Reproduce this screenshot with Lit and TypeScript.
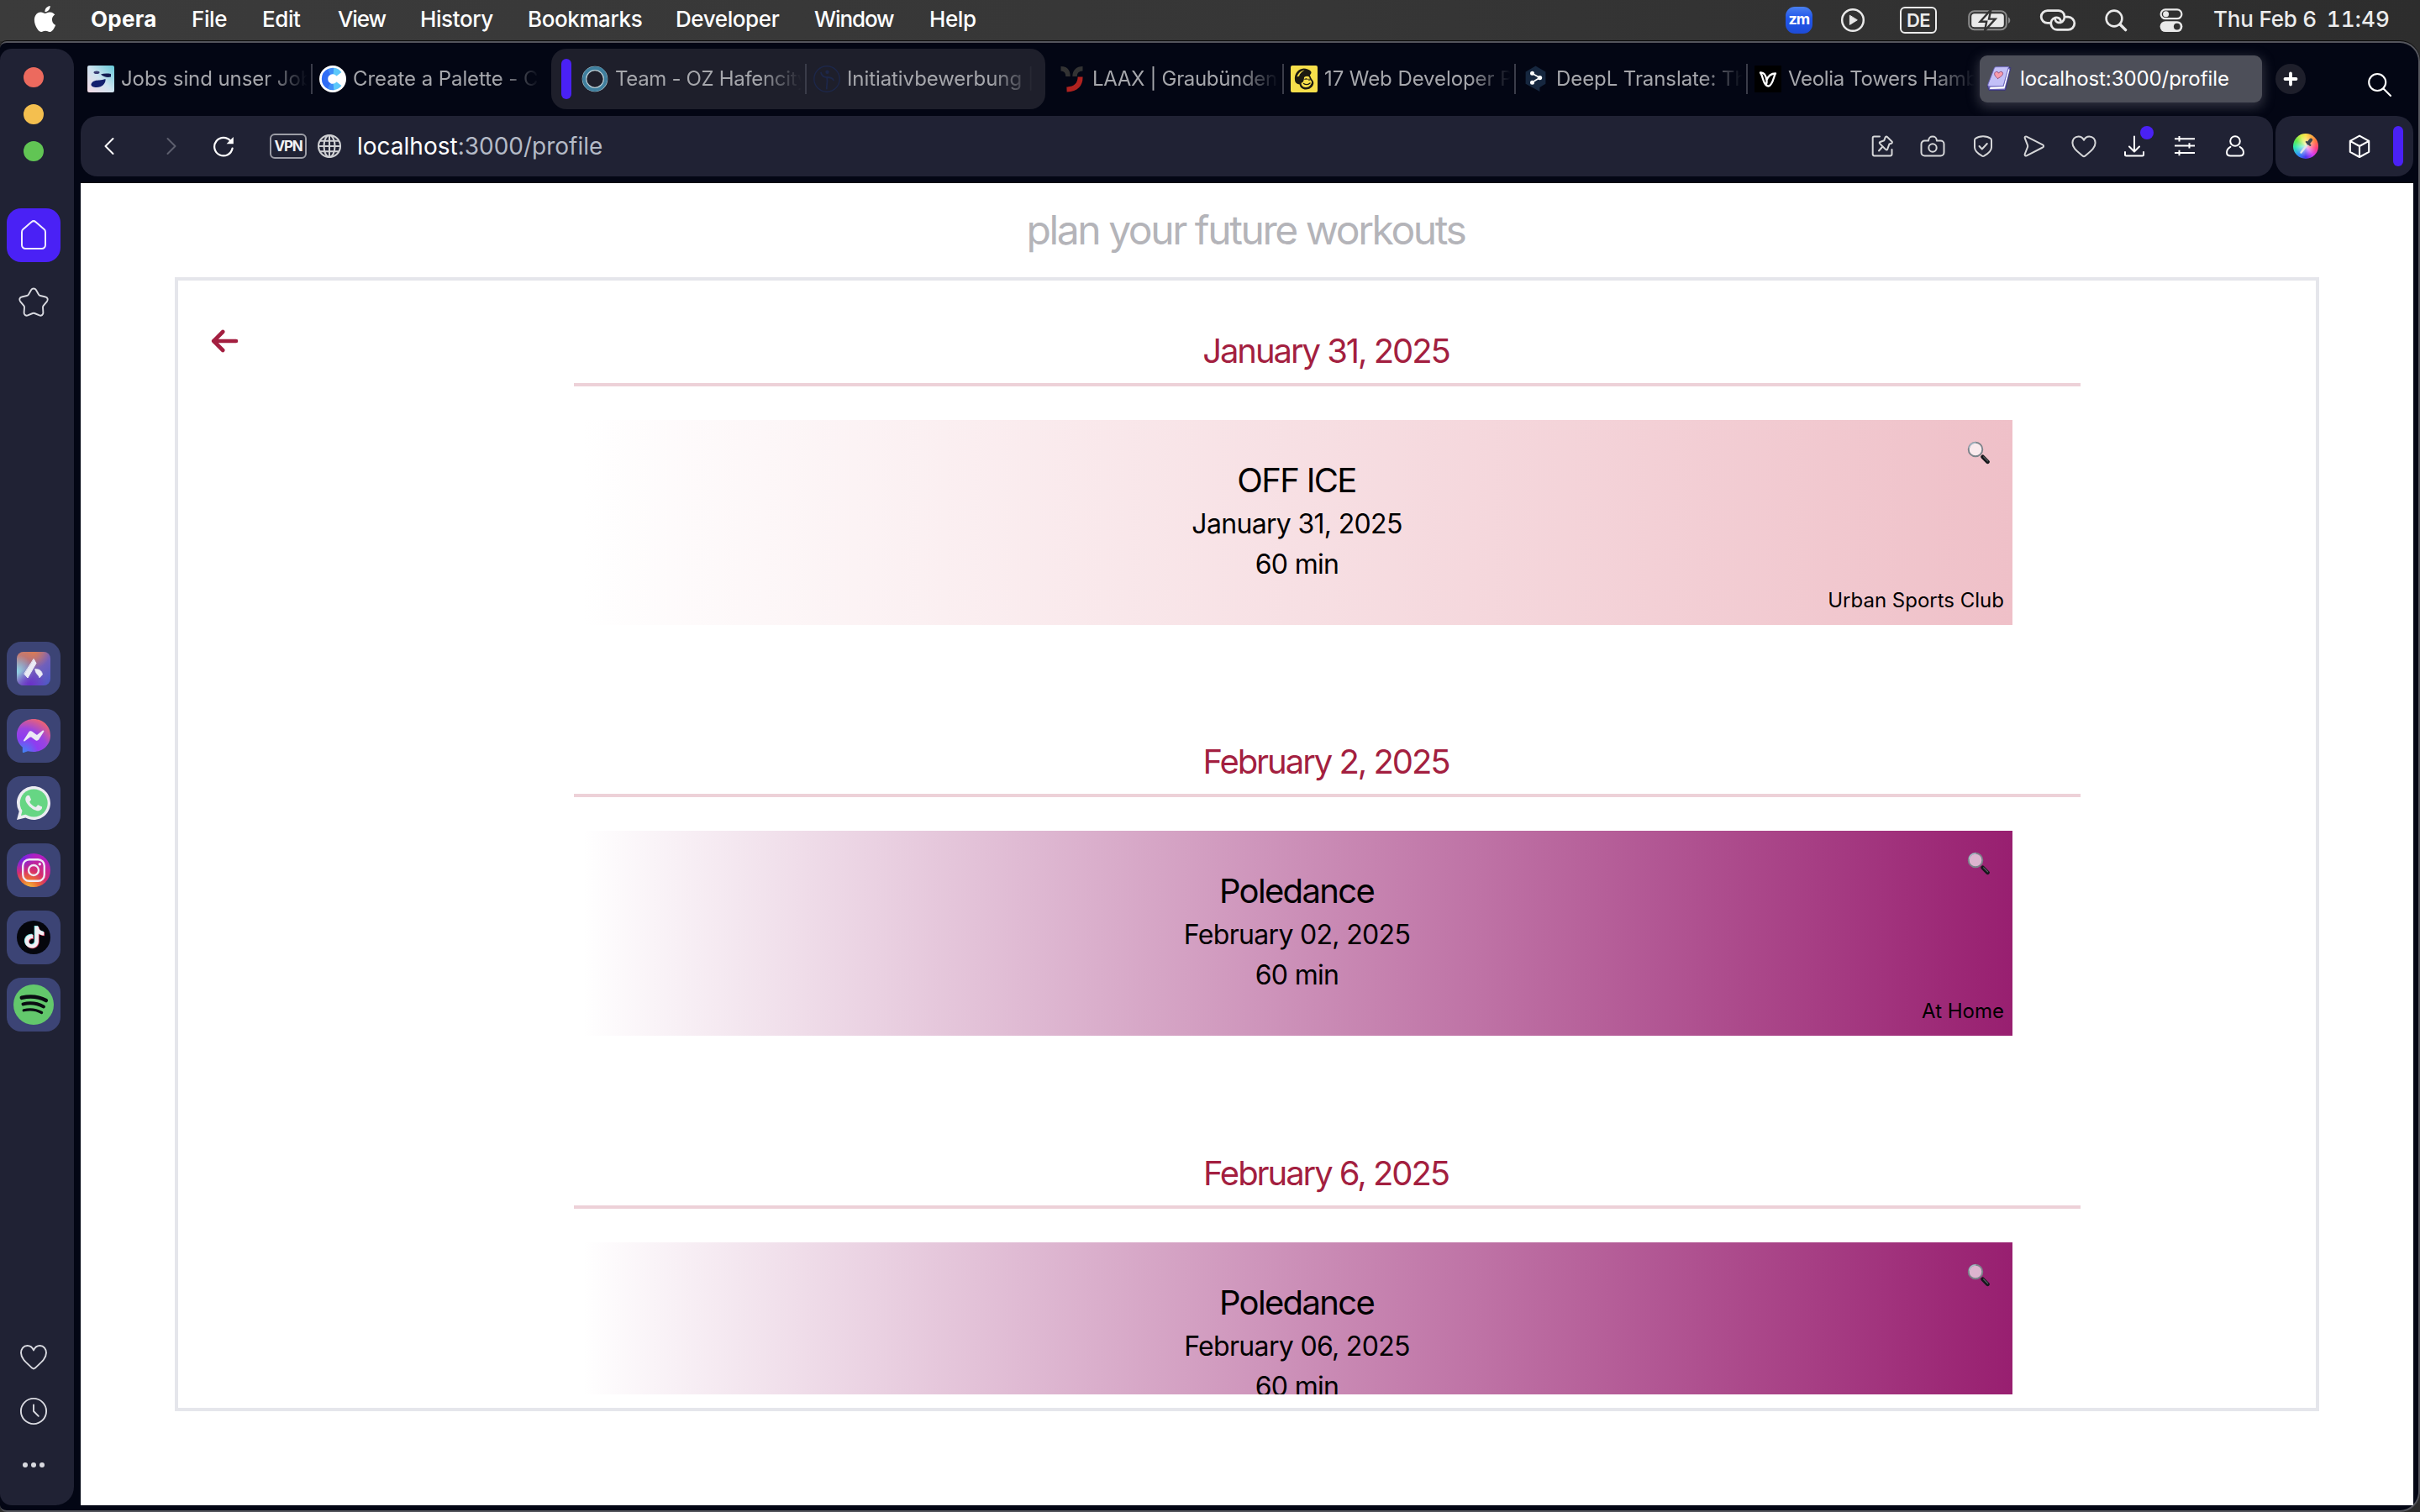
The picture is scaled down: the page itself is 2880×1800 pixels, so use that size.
import { LitElement, html, css, svg, nothing, type TemplateResult, type SVGTemplateResult } from "lit";
import { customElement, property } from "lit/decorators.js";
import { classMap } from "lit/directives/class-map.js";

const icon = (w: number, h: number, viewBox: string, body: SVGTemplateResult): TemplateResult =>
  html`<svg width=${w} height=${h} viewBox=${viewBox} fill="none" stroke-linecap="round" stroke-linejoin="round">${body}</svg>`;

/* ---------- menu bar ---------- */

const apple = icon(31, 31, "0 0 24 24", svg`<path fill="#fff" d="M12.152 6.896c-.948 0-2.415-1.078-3.96-1.04-2.04.027-3.91 1.183-4.961 3.014-2.117 3.675-.546 9.103 1.519 12.09 1.013 1.454 2.208 3.09 3.792 3.039 1.52-.065 2.09-.987 3.935-.987 1.831 0 2.35.987 3.96.948 1.637-.026 2.676-1.48 3.676-2.948 1.156-1.688 1.636-3.325 1.662-3.415-.039-.013-3.182-1.221-3.22-4.857-.026-3.04 2.48-4.494 2.597-4.559-1.429-2.09-3.623-2.324-4.39-2.376-2-.156-3.675 1.09-4.61 1.09zM15.53 3.83c.843-1.012 1.4-2.427 1.245-3.83-1.207.052-2.662.805-3.532 1.818-.78.896-1.454 2.338-1.273 3.714 1.338.104 2.715-.688 3.559-1.701"/>`);

const playCircle = icon(30, 30, "0 0 30 30", svg`<circle cx="15" cy="15" r="12.8" stroke="#e9e9e9" stroke-width="2.5"/><path d="M11.4 9.6v10.8L20 15z" fill="#e9e9e9" stroke="#e9e9e9" stroke-width="1"/>`);

const battery = icon(52, 28, "0 0 52 28", svg`
  <rect x="1.2" y="3.2" width="44.6" height="22" rx="6.5" stroke="#8b8b8b" stroke-width="2"/>
  <rect x="4.2" y="6.2" width="38.6" height="16" rx="3.5" fill="#e9e9e9"/>
  <path d="M48 10.6c3 1 3 6.4 0 7.4z" fill="#8b8b8b"/>
  <path d="M27.4 1.6 14.6 15.8h7.6L20 26.6l12.6-14H25z" fill="#e9e9e9" stroke="#333" stroke-width="2.4" stroke-linejoin="miter"/>`);

const links = icon(44, 28, "0 0 44 28", svg`
  <g stroke="#e9e9e9" stroke-width="2.8">
  <path d="M12 17.4H9.6a7.4 7.4 0 0 1 0-14.8h13.2a7.4 7.4 0 0 1 2.6 14.2c-3.2.7-6-1-6.6-3.6"/>
  <path d="M32 10.2h2.2a7.4 7.4 0 0 1 0 15.2H21.4a7.4 7.4 0 0 1-2.6-14.4c3.2-.8 6 1 6.6 3.6"/></g>`);

const spotlight = icon(28, 28, "0 0 28 28", svg`<circle cx="12" cy="12" r="9.4" stroke="#e9e9e9" stroke-width="2.6"/><path d="m19 19 6.6 6.6" stroke="#e9e9e9" stroke-width="3.4"/>`);

const controlCentre = icon(28, 28, "0 0 28 28", svg`
  <rect x="1.6" y="1.4" width="24.8" height="10.8" rx="5.4" stroke="#e9e9e9" stroke-width="2.2"/>
  <circle cx="7.6" cy="6.8" r="3.5" fill="#e9e9e9"/>
  <rect x=".6" y="15.2" width="26.8" height="12.8" rx="6.4" fill="#e9e9e9"/>
  <circle cx="20.8" cy="21.6" r="3.9" fill="#303030"/>`);

const MENUS: { label: string; tight?: boolean; bold?: boolean }[] = [
  { label: "Opera", bold: true }, { label: "File" }, { label: "Edit" }, { label: "View", tight: true },
  { label: "History" }, { label: "Bookmarks" }, { label: "Developer" }, { label: "Window", tight: true }, { label: "Help" },
];

@customElement("mac-menubar")
export class MacMenubar extends LitElement {
  static styles = css`
    :host { display: flex; justify-content: space-between; height: 49px; background: linear-gradient(90deg, #3b3b3b, #363636 55%, #2d2d2d); color: #fff; font: 500 26px/45px Inter, "Liberation Sans", sans-serif; letter-spacing: -.4px; }
    svg { display: block; }
    .menus { display: grid; grid-template-columns: 70px 120px 84px 90px 98px 128px 176px 165px 137px 70px; padding-left: 38px; white-space: nowrap; }
    .logo { padding-top: 7px; }
    .bold { font-weight: 700; letter-spacing: .3px; }
    .tight { letter-spacing: -1.1px; }
    .status { display: flex; padding-right: 36px; color: #ececec; white-space: nowrap; }
    .cell { height: 48px; display: flex; align-items: center; }
    .zoom { width: 32px; height: 32px; border-radius: 11px; background: linear-gradient(#4a80ee, #2358ec 40%, #1d4bd6); color: #fff; font: 700 18px/29px Inter, sans-serif; letter-spacing: -.9px; text-align: center; margin-right: 33px; }
    .lang { box-sizing: border-box; width: 44px; height: 32px; border: 2.5px solid #ececec; border-radius: 6px; font: 600 22px/28px Inter, sans-serif; letter-spacing: -.8px; text-align: center; margin: 0 37px 0 41px; }
    .links { margin-left: 33px; }
    .spot { margin-left: 33px; }
    .cc { margin-left: 38px; }
    .day { margin-left: 36px; letter-spacing: -.17px; }
    .time { margin-left: 12px; font-variant-numeric: tabular-nums; letter-spacing: .2px; }
  `;
  render() {
    return html`
      <div class="menus">
        <span class="logo">${apple}</span>
        ${MENUS.map((m) => html`<span class=${classMap({ bold: !!m.bold, tight: !!m.tight })}>${m.label}</span>`)}
      </div>
      <div class="status">
        <div class="cell"><div class="zoom">zm</div></div>
        <div class="cell">${playCircle}</div>
        <div class="cell"><div class="lang">DE</div></div>
        <div class="cell">${battery}</div>
        <div class="cell links">${links}</div>
        <div class="cell spot">${spotlight}</div>
        <div class="cell cc">${controlCentre}</div>
        <span class="day">Thu Feb 6</span>
        <span class="time">11:49</span>
      </div>`;
  }
}

/* ---------- side bar ---------- */

const home = icon(40, 40, "0 0 40 40", svg`<path stroke="#efecff" stroke-width="2" d="M6 16.2c0-1.3.5-2.4 1.4-3.3L17.5 4.2a3.8 3.8 0 0 1 5 0l10.1 8.7c.9.9 1.4 2 1.4 3.3v15.6a4.2 4.2 0 0 1-4.2 4.2H10.2A4.2 4.2 0 0 1 6 31.800z"/>`);
const star = icon(40, 40, "0 0 40 40", svg`<path stroke="#d9dae0" stroke-width="1.9" d="M17.200 5.100a3.300 3.300 0 0 1 5.600 0l3.300 5.600c.4.700 1 1.100 1.800 1.300l6.300 1.500a3.200 3.200 0 0 1 1.700 5.300l-4.200 5c-.5.600-.7 1.300-.7 2.100l.4 6.400a3.200 3.200 0 0 1-4.500 3.100l-5.700-2.400c-.8-.3-1.600-.3-2.400 0l-5.700 2.400a3.200 3.200 0 0 1-4.500-3.100l.4-6.400c.100-.8-.2-1.500-.7-2.100l-4.200-5a3.200 3.200 0 0 1 1.700-5.300l6.300-1.500c.8-.2 1.400-.6 1.800-1.300z"/>`);
const heart = icon(36, 36, "0 0 36 36", svg`<path stroke="#d9dae0" stroke-width="1.9" d="M18 9.500C16.600 6 13.800 4 10.500 4 5.800 4 3 7.900 3 12.600c0 7.200 7.400 12.400 13.400 18.100.9.900 2.300.900 3.200 0C25.600 25 33 19.800 33 12.600 33 7.900 30.200 4 25.500 4 22.200 4 19.400 6 18 9.500z"/>`);
const clock = icon(36, 36, "0 0 36 36", svg`<circle cx="18" cy="18" r="15.100" stroke="#d9dae0" stroke-width="1.9"/><path stroke="#d9dae0" stroke-width="1.9" d="M18 10.500V18l5.800 5.800"/>`);
const dots = icon(36, 36, "0 0 36 36", svg`<g fill="#d9dae0"><circle cx="8" cy="18" r="3"/><circle cx="18" cy="18" r="3"/><circle cx="28" cy="18" r="3"/></g>`);

const aria = icon(40, 40, "0 0 40 40", svg`
  <defs>
    <linearGradient id="ar" x1="0" y1="0" x2="1" y2="1"><stop offset="0" stop-color="#cf7f68"/><stop offset=".5" stop-color="#7a62b8"/><stop offset="1" stop-color="#4a58c8"/></linearGradient>
    <radialGradient id="ac" cx="0" cy=".58" r=".5"><stop offset="0" stop-color="#8fd6e8"/><stop offset="1" stop-color="#8fd6e8" stop-opacity="0"/></radialGradient>
    <radialGradient id="ap" cx=".4" cy="1" r=".5"><stop offset="0" stop-color="#6a2fc8"/><stop offset="1" stop-color="#6a2fc8" stop-opacity="0"/></radialGradient>
    <radialGradient id="ao" cx=".5" cy="0" r=".5"><stop offset="0" stop-color="#d97b55"/><stop offset="1" stop-color="#d97b55" stop-opacity="0"/></radialGradient>
  </defs>
  <rect width="40" height="40" rx="8" fill="url(#ar)"/><rect width="40" height="40" rx="8" fill="url(#ao)"/><rect width="40" height="40" rx="8" fill="url(#ac)"/><rect width="40" height="40" rx="8" fill="url(#ap)"/>
  <path d="M20.200 8.800 23 13.600 13 31l-4-4.600z" fill="#ebebf5" stroke="#ebebf5" stroke-width="1"/>
  <path d="M21.800 20.500c4.800-.6 8.200 2.400 8.800 6.500l-3.600 4c-1-3.800-5.200-4.800-5.200-10.500z" fill="#ebebf5" stroke="#ebebf5" stroke-width=".6"/>`);

const messenger = icon(40, 40, "0 0 40 40", svg`
  <defs><radialGradient id="ms" cx=".2" cy="1" r="1.1"><stop offset="0" stop-color="#3d86f5"/><stop offset=".4" stop-color="#8f3cf0"/><stop offset=".65" stop-color="#9a45e0"/><stop offset="1" stop-color="#f0646e"/></radialGradient></defs>
  <path fill="url(#ms)" d="M20 0C8.700 0 0 8.300 0 19.200c0 6 2.600 10.900 6.800 14.300V39c0 .7.600 1.200 1.300.9l5-1.700c2.200.6 4.500.8 6.900.8 11.300 0 20-8.300 20-19.500S31.300 0 20 0z"/>
  <path fill="#ebe9f5" d="m8.200 25 5.900-9.300c1-1.500 3-1.800 4.400-.8l4.700 3.500c.4.300 1 .3 1.400 0l6.300-4.800c.8-.6 1.900.4 1.300 1.300L26.300 24.300c-1 1.500-3 1.800-4.400.8l-4.700-3.500c-.4-.3-1-.3-1.400 0l-6.300 4.700c-.8.700-1.900-.4-1.300-1.300z"/>`);

const whatsapp = icon(40, 40, "0 0 40 40", svg`
  <path fill="#ececf2" d="M0 40l2.700-10A19.700 19.700 0 0 1 0 20C0 9 9 0 20 0s20 9 20 20-9 20-20 20c-3.400 0-6.700-.9-9.600-2.500z"/>
  <circle cx="20.200" cy="20" r="16.500" fill="#66d684"/><path fill="#66d684" d="m5 35 1.700-6.500 5.300 4.700z"/>
  <path fill="#ececf2" transform="translate(.4 .4) scale(1.640)" d="M17.472 14.382c-.297-.149-1.758-.867-2.030-.967-.273-.099-.471-.148-.67.15-.197.297-.767.966-.94 1.164-.173.199-.347.223-.644.075-.297-.15-1.255-.463-2.390-1.475-.883-.788-1.480-1.761-1.653-2.059-.173-.297-.018-.458.13-.606.134-.133.298-.347.446-.52.149-.174.198-.298.298-.497.099-.198.05-.371-.025-.52-.075-.149-.669-1.612-.916-2.207-.242-.579-.487-.5-.669-.51-.173-.008-.371-.01-.57-.01-.198 0-.52.074-.792.372-.272.297-1.040 1.016-1.040 2.479 0 1.462 1.065 2.875 1.213 3.074.149.198 2.096 3.200 5.077 4.487.709.306 1.262.489 1.694.625.712.227 1.360.195 1.871.118.571-.085 1.758-.719 2.006-1.413.248-.694.248-1.289.173-1.413-.074-.124-.272-.198-.57-.347"/>`);

const instagram = icon(40, 40, "0 0 40 40", svg`
  <defs>
    <radialGradient id="ig" cx=".35" cy="1.050" r="1"><stop offset="0" stop-color="#f3c63f"/><stop offset=".3" stop-color="#ec6a35"/><stop offset=".55" stop-color="#d52e6c"/><stop offset="1" stop-color="#b41fc0"/></radialGradient>
    <radialGradient id="ib" cx=".1" cy=".1" r=".5"><stop offset="0" stop-color="#5a24f5"/><stop offset="1" stop-color="#8a24e0" stop-opacity="0"/></radialGradient>
  </defs>
  <circle cx="20" cy="20" r="20" fill="url(#ig)"/><circle cx="20" cy="20" r="20" fill="url(#ib)"/>
  <rect x="7.200" y="7.200" width="25.600" height="25.600" rx="7.500" stroke="#efeaf5" stroke-width="2.400"/>
  <circle cx="20" cy="20" r="6" stroke="#efeaf5" stroke-width="2.400"/><circle cx="27.300" cy="12.700" r="1.700" fill="#efeaf5"/>`);

const note = "M12.525.02c1.31-.02 2.61-.01 3.91-.02.08 1.53.63 3.09 1.75 4.17 1.12 1.11 2.7 1.62 4.24 1.79v4.03c-1.44-.05-2.89-.35-4.2-.97-.57-.26-1.1-.59-1.62-.93-.01 2.92.01 5.84-.02 8.75-.08 1.4-.54 2.79-1.35 3.94-1.31 1.92-3.58 3.17-5.91 3.21-1.43.08-2.86-.31-4.08-1.03-2.02-1.19-3.44-3.37-3.65-5.71-.02-.5-.03-1-.01-1.49.18-1.9 1.12-3.72 2.58-4.96 1.66-1.44 3.98-2.13 6.15-1.72.02 1.48-.04 2.96-.04 4.44-.99-.32-2.15-.23-3.02.37-.63.41-1.11 1.04-1.36 1.75-.21.51-.15 1.07-.14 1.61.24 1.64 1.82 3.02 3.5 2.87 1.12-.01 2.19-.66 2.77-1.61.19-.33.4-.67.41-1.06.1-1.79.06-3.57.07-5.36.01-4.03-.01-8.05.02-12.07z";
const tiktok = icon(40, 40, "0 0 40 40", svg`
  <circle cx="20" cy="20" r="20" fill="#05060c"/>
  <path fill="#6fe0e0" transform="translate(7.200 6) scale(1.080)" d=${note}/>
  <path fill="#e0405f" transform="translate(8.800 7.400) scale(1.080)" d=${note}/>
  <path fill="#f1f0f5" transform="translate(8 6.700) scale(1.080)" d=${note}/>`);

const spotify = icon(48, 48, "0 0 48 48", svg`
  <circle cx="24" cy="24" r="24" fill="#63c86c"/>
  <g stroke="#0a0c12"><path stroke-width="4.600" d="M9.800 15.800c9.500-2.200 20.500-1.300 29 3.200"/><path stroke-width="4" d="M11.500 23.400c8.500-2 17-1 24.500 3"/><path stroke-width="3.200" d="M12.200 30.800c7.500-1.700 15-.900 21.400 2.700"/></g>`);

@customElement("opera-sidebar")
export class OperaSidebar extends LitElement {
  static styles = css`
    :host { display: flex; flex-direction: column; align-items: center; box-sizing: border-box; width: 88px; height: 1734px; padding-right: 8px; background: #202234; border-radius: 14px 22px 22px 14px; }
    svg { display: block; }
    .lights { display: flex; flex-direction: column; gap: 20px; padding-top: 22px; }
    .light { width: 24px; height: 24px; border-radius: 50%; }
    .red { background: #ec6a5e; } .amber { background: #f4bf4f; } .green { background: #61c554; }
    .tile { width: 64px; height: 64px; border-radius: 17px; display: flex; align-items: center; justify-content: center; }
    .home { background: #4a21f5; margin-top: 56px; }
    .plain { margin-top: 16px; }
    .apps { display: flex; flex-direction: column; gap: 16px; margin-top: 372px; }
    .apps .tile { background: #3c4475; }
    .foot { display: flex; flex-direction: column; gap: 28px; margin-top: 370px; }
  `;
  render() {
    return html`
      <div class="lights"><i class="light red"></i><i class="light amber"></i><i class="light green"></i></div>
      <div class="tile home">${home}</div>
      <div class="tile plain">${star}</div>
      <div class="apps">${[aria, messenger, whatsapp, instagram, tiktok, spotify].map((a) => html`<div class="tile">${a}</div>`)}</div>
      <div class="foot">${heart}${clock}${dots}</div>`;
  }
}

/* ---------- tabs ---------- */

const fav = {
  jobs: icon(32, 32, "0 0 32 32", svg`
    <defs><linearGradient id="jb" x1="0" y1="1" x2="1" y2="0"><stop offset="0" stop-color="#f4dbe6"/><stop offset=".5" stop-color="#cfe3f0"/><stop offset="1" stop-color="#63c9d8"/></linearGradient></defs>
    <rect width="32" height="32" rx="2" fill="url(#jb)"/>
    <ellipse cx="11" cy="8.300" rx="3.500" ry="1.800" fill="#3a3c74"/><path d="M16 10.500c3-1 7-1.300 12-.5v3.500c-4 1.200-9 .2-12-3z" fill="#141c52"/>
    <path d="M4.500 22c1.500-4 7-4.500 9.500-4.500 3 0 5-1 7.500-1.500.8 5-4 10-10.500 10-4 0-7-1.200-6.500-4z" fill="#13206e"/>`),
  coolors: icon(32, 32, "0 0 32 32", svg`
    <circle cx="16" cy="16" r="16" fill="#fff"/>
    <g stroke-linecap="butt" stroke-width="7.400"><path stroke="#2f6df6" d="M12 24.600A9.500 9.500 0 0 1 12 7.400"/><path stroke="#3f8df8" d="M11.500 7.600a9.500 9.500 0 0 1 6-1"/><path stroke="#3f8df8" d="M11.500 24.400a9.500 9.500 0 0 0 6 1"/><path stroke="#5cc8fa" d="M17 6.500a9.500 9.500 0 0 1 6.500 3.700M17 25.500a9.500 9.500 0 0 0 6.500-3.700"/></g>`),
  oz: icon(32, 32, "0 0 32 32", svg`<circle cx="16" cy="16" r="13.500" stroke="#b9cdd4" stroke-width="3.600"/><path stroke="#3f7f9e" stroke-width="4.600" d="M16 3.200c8 0 11.500 3.600 12.800 12.800C27.500 24 24 27.800 16 28.800 7.800 27.600 4.500 24.200 3.200 16 4.500 7.600 8 4.200 16 3.200z"/><circle cx="16" cy="16" r="10.300" stroke="#b9cdd4" stroke-width="1.200"/>`),
  initiative: icon(32, 32, "0 0 32 32", svg`<circle cx="16" cy="16" r="15.200" stroke="#1d2749" stroke-width="1.400"/><circle cx="16.500" cy="7.800" r="2.200" fill="#1d2749"/><path stroke="#1d2749" stroke-width="1.800" d="M9 8.500c1 4 4 5.500 7 5.500 4 0 7 1 8 3.500M16 14c1.500 5-.5 9-.2 13.500"/>`),
  laax: icon(32, 32, "0 0 32 32", svg`<g stroke-linecap="butt"><path stroke="#333" stroke-width="5.400" d="M2.500 3.800C8 3.800 11 7 11 13M28.500 3.800C22.500 3.800 19 7 19 13"/><path stroke="#b0221f" stroke-width="6" d="M25.600 13.500c0 9-4.600 14.500-16.100 15"/></g>`),
  mailchimp: icon(32, 32, "0 0 32 32", svg`
    <rect width="32" height="32" rx="2" fill="#f7df4b"/>
    <path fill="#1c1a12" d="M5 17.500C4 10 9 4 15.500 3.600c3 0 7 1.200 8.600 3.400 1.200 2-.3 3-1.300 4.500 1 1.800 1.500 3.700 2.700 5.300 1 1.500 2.200 2.500 1.700 5-1 4-4.700 6.700-9 6.700-4.200 0-7-2.400-7.600-6C7.500 22.200 5.200 20.500 5 17.500z"/>
    <path fill="#f7df4b" d="M7.500 13.500C8.600 9.500 12 6 16.500 5.400c-3.500 2-5.500 4-6.500 7.300zM16 14c2-1.600 4.500-1.800 6-.4l1.500 4c1.600 1 2 2.500 1 4.200-1.300 3-4 4.500-7 4.300-3.400-.3-5-2.600-5-5.300 2.500-.3 3.500-3.500 3.500-6.800z"/>
    <path stroke="#1c1a12" stroke-width="1.300" d="M17 16.300c1-.6 2-.5 2.800 0M22 16.200v1.200M15.500 21.500c2.500 1.800 5 1.500 7.500-.5M6.200 15c.8-1 2.200-1.200 3.300.2"/>`),
  deepl: icon(32, 32, "0 0 32 32", svg`<path fill="#16273f" d="M15.500.6 27.400 7.500v14.300l-7 4.200v5L16 28.500 3.600 21.800V7.500z"/><g stroke="#fff" stroke-width="1.600"><path d="m11.500 9.500 9 5-9 5.500"/></g><g fill="#fff"><circle cx="11.500" cy="9.300" r="2.500"/><circle cx="20.500" cy="14.600" r="2.700"/><circle cx="11.500" cy="20.200" r="2.500"/></g>`),
  veolia: icon(32, 32, "0 0 32 32", svg`<rect width="32" height="32" fill="#000"/><path stroke="#fff" stroke-width="2.300" d="M7 8.500c4-.5 6.500 3 7.500 9 1.500-4.500 4-8 10.500-8-2.500 4-2.500 11-7 14.500-2 1-3.500.5-5-1.500C9.500 18 10 12.500 7 8.500zM14.500 17.500c.3 2 .2 3.500-.5 5"/>`),
  book: icon(32, 32, "0 0 32 32", svg`
    <path fill="#6a63b8" stroke="#3e3a78" stroke-width="1" d="M10 3 29 2.500 22.500 29.500 3 29.500 1.500 25z"/>
    <path fill="#fff" d="M27.500 5 21.500 27.500 4 28l.5-2.500 16-.5 5.500-21z"/>
    <path fill="#c3c0f7" stroke="#6f69c0" stroke-width=".9" d="M9.500 3c.5-.9 1-1.300 2-1.300L26.500 1.500 20 24.500l-16.500.3c-1.500 0-2-1-1.600-2.300z"/>
    <path fill="#f79bab" stroke="#8f4a78" stroke-width=".9" d="M13.500 15.500C9.500 12.500 8.800 9.600 10.500 8c1.500-1.300 3.500-.6 4 1.200 1-1.900 3.200-2.500 4.500-1.200 1.800 2-.5 5-5.500 7.500z"/>`),
};

@customElement("browser-tab")
export class BrowserTab extends LitElement {
  @property() label = "";
  @property({ attribute: false }) favicon?: TemplateResult;
  @property({ type: Boolean, reflect: true }) active = false;
  @property({ type: Boolean, reflect: true }) divider = false;
  @property({ type: Boolean, reflect: true }) tight = false;
  static styles = css`
    :host { display: flex; align-items: center; box-sizing: border-box; width: 276px; height: 36px; padding-left: 8px; border-right: 2px solid transparent; color: #a6a7ac; }
    :host([divider]) { border-right-color: #3a3c49; }
    :host([active]) { width: 336px; height: 56px; border: 0; border-radius: 9px; background: #4d4f59; color: #fff; box-shadow: 0 4px 14px 2px rgba(120, 122, 135, .38); }
    svg { display: block; flex: none; }
    .label { flex: 1; min-width: 0; margin: 0 4px 0 8px; overflow: hidden; white-space: nowrap; font-size: 24px; line-height: 34px; letter-spacing: -.08px; -webkit-mask-image: linear-gradient(90deg, #000 calc(100% - 50px), transparent); mask-image: linear-gradient(90deg, #000 calc(100% - 50px), transparent); }
    :host([tight]) .label { letter-spacing: -.33px; }
    :host([active]) .label { -webkit-mask-image: none; mask-image: none; }
  `;
  render() {
    return html`${this.favicon ?? nothing}<span class="label">${this.label}</span>`;
  }
}

/* ---------- address bar ---------- */

const S = "#d5d6d8";
const back = icon(24, 24, "0 0 24 24", svg`<path stroke="#fff" stroke-width="2" d="M16.500 3 7.500 12l9 9"/>`);
const forward = icon(24, 24, "0 0 24 24", svg`<path stroke="#5d5f6e" stroke-width="2" d="m7.500 3 9 9-9 9"/>`);
const reload = icon(28, 28, "0 0 28 28", svg`<path stroke="#fff" stroke-width="2.200" d="M24.600 16.500A10.800 10.800 0 1 1 22.500 8"/><path fill="#fff" d="M25.800 3v8.300h-8.200z"/>`);
const globe = icon(30, 30, "0 0 30 30", svg`<g stroke="#cfd0d3" stroke-width="2.100"><circle cx="15" cy="15" r="13"/><ellipse cx="15" cy="15" rx="6.500" ry="13"/><path d="M15 2v26M2 15h26M4 8.700h22M4 21.300h22"/></g>`);

const ACTIONS: { body: SVGTemplateResult; dot?: boolean }[] = [
  { body: svg`<g stroke=${S} stroke-width="2"><path d="M13 4.500H6.500A1.800 1.800 0 0 0 4.700 6.300v19.300a1.800 1.800 0 0 0 1.800 1.800h19.200a1.800 1.800 0 0 0 1.800-1.800V20"/><path d="m19.800 5.200c.8-.8 1.600-.8 2.400 0l5.300 5.300c.8.800.4 1.900-.6 2.200l-2.500.8-2.200 6.200c-.3.900-1.200 1-1.900.4l-7.200-7.200c-.7-.7-.4-1.600.5-1.900l4.600-1.700z"/><path d="m16.500 16.500-4.500 5"/></g>` },
  { body: svg`<g stroke=${S} stroke-width="2"><path d="M11 9.500c.6-3.600 1.500-5 5-5s4.400 1.400 5 5h4.500a4 4 0 0 1 4 4v10a4 4 0 0 1-4 4h-19a4 4 0 0 1-4-4v-10a4 4 0 0 1 4-4z"/><circle cx="16" cy="18" r="4.700"/></g>` },
  { body: svg`<g stroke=${S} stroke-width="2"><path d="M16 4.200c3.200 0 7 1 9.200 2.800.6.500.8 1.200.8 2v8.500c0 5-5.500 8.300-8.800 10.200-.8.400-1.600.4-2.400 0C11.500 25.800 6 22.500 6 17.500V9c0-.8.2-1.500.8-2C9 5.200 12.800 4.200 16 4.200z"/><path d="m11.500 16 3.300 3.500 6-6.500"/></g>` },
  { body: svg`<path stroke=${S} stroke-width="2" transform="translate(1 0)" d="M6.800 4.600 26 14.300c1.400.8 1.400 2.400 0 3.200L6.800 27.300c-1.400.6-2.500-.4-2.100-1.800L8 17.200c.3-.9.300-1.500 0-2.400L4.700 6.400c-.4-1.400.7-2.400 2.100-1.800z"/>` },
  { body: svg`<path stroke=${S} stroke-width="2" d="M16 8.800C14.700 5.800 12.300 4.400 9.500 4.400 5.200 4.400 2.400 7.800 2.400 12c0 6.600 6.700 10.800 12 15.600.9.800 2.300.8 3.200 0 5.300-4.800 12-9 12-15.600 0-4.200-2.800-7.600-7.100-7.600-2.800 0-5.200 1.400-6.500 4.400z"/>` },
  { dot: true, body: svg`<g stroke="#fff" stroke-width="2"><path d="M16 4.500V22M10 16.500l6 6 6-6M5 23v3a1.500 1.500 0 0 0 1.500 1.500h19A1.500 1.500 0 0 0 27 26v-3"/></g>` },
  { body: svg`<g stroke="#fff" stroke-width="2" stroke-linecap="butt"><path d="M4 7.200h24M4 15.400h24M4 24h24M9.500 4v6.400M21.500 12.200v6.400M9.500 20.800v6.400"/></g>` },
  { body: svg`<g stroke="#fff" stroke-width="2"><circle cx="16" cy="10" r="5.800"/><path d="M10.400 16.800C7.500 18.500 6 21 6 23.500c0 2.800 1.800 4 4.500 4h11c2.700 0 4.500-1.200 4.500-4 0-2.500-1.500-5-4.400-6.700"/></g>` },
];

const cube = icon(32, 32, "0 0 32 32", svg`<path stroke="#fff" stroke-width="2.100" d="M16 3.600 27.200 9.800v13L16 29 4.800 22.800v-13zM4.800 9.800 16 16l11.200-6.200M16 16v13"/>`);
const dropper = icon(20, 24, "0 0 20 24", svg`<path stroke="#dfe6ea" stroke-width="2.400" d="m4.500 19.500 8-10"/><path stroke="#3b4850" stroke-width="4" d="m13 8.500 3.200-4"/><path stroke="#3b4850" stroke-width="2.200" d="m10.800 7 4.600 3.800"/>`);

/* ---------- page ---------- */

const arrowLeft = icon(36, 32, "0 0 36 32", svg`<path stroke="#a31f40" stroke-width="4.600" d="M32 16H6M16.200 5 5.200 16l11 11"/>`);
const magnifier = icon(28, 28, "0 0 28 28", svg`
  <path stroke="#16181b" stroke-width="4.600" d="m18.600 18.800 5.900 6"/><path stroke="#5b6166" stroke-width="1.200" d="m19.600 18.800 5 5"/>
  <circle cx="10" cy="10" r="8.300" fill="#fff" fill-opacity=".66" stroke="#7b838a" stroke-width="1.900"/><path stroke="#a9bac8" stroke-width="1.500" d="M2.600 8A7.800 7.800 0 0 1 10 2"/>`);

interface Workout { day: string; title: string; date: string; minutes: number; place: string; kind: "ice" | "pole"; }
const WORKOUTS: Workout[] = [
  { day: "January 31, 2025", title: "OFF ICE", date: "January 31, 2025", minutes: 60, place: "Urban Sports Club", kind: "ice" },
  { day: "February 2, 2025", title: "Poledance", date: "February 02, 2025", minutes: 60, place: "At Home", kind: "pole" },
  { day: "February 6, 2025", title: "Poledance", date: "February 06, 2025", minutes: 60, place: "At Home", kind: "pole" },
];

@customElement("workout-page")
export class WorkoutPage extends LitElement {
  static styles = css`
    :host { display: block; box-sizing: border-box; width: 2776px; height: 1574px; padding: 26px 112px 0; background: #fff; }
    svg { display: block; }
    h1 { margin: 0 0 26px; padding-right: 3px; height: 60px; font-size: 48px; line-height: 60px; font-weight: 400; letter-spacing: -2.430px; text-align: center; color: #b4b4b9; }
    .panel { display: flex; box-sizing: border-box; height: 1350px; border: 4px solid #e5e6eb; padding-bottom: 16px; overflow: hidden; }
    .nav { box-sizing: border-box; width: 471px; padding: 56px 0 0 37px; flex: none; }
    .list { width: 1793px; padding-top: 56px; height: 1270px; flex: none; overflow: hidden; }
    .day { height: 489.4px; }
    h2 { margin: 0 0 40px; padding: 0 3px 10px 0; border-bottom: 4px solid #edd1d8; font-size: 40px; line-height: 56px; font-weight: 400; letter-spacing: -2.050px; text-align: center; color: #a31f40; }
    .card { position: relative; box-sizing: border-box; width: 1702px; height: 244px; margin-left: 10px; padding-top: 44px; text-align: center; color: #000; }
    .ice { background: linear-gradient(90deg, transparent, #efc0c8); }
    .pole { background: linear-gradient(90deg, transparent, #981f70); }
    .title { padding-right: 2px; font-size: 40px; line-height: 56px; letter-spacing: -1.650px; }
    .line { padding-right: 1px; font-size: 32px; line-height: 48px; letter-spacing: -.680px; }
    .place { font-size: 24px; line-height: 38px; text-align: right; padding-right: 10px; }
    .lens { position: absolute; top: 25px; right: 26px; }
  `;
  render() {
    return html`
      <h1>plan your future workouts</h1>
      <div class="panel">
        <div class="nav">${arrowLeft}</div>
        <div class="list">
          ${WORKOUTS.map((w) => html`
            <section class="day">
              <h2>${w.day}</h2>
              <div class="card ${w.kind}">
                <div class="title">${w.title}</div>
                <div class="line">${w.date}</div>
                <div class="line">${w.minutes} min</div>
                <div class="place">${w.place}</div>
                <div class="lens">${magnifier}</div>
              </div>
            </section>`)}
        </div>
      </div>`;
  }
}

@customElement("app-root")
export class AppRoot extends LitElement {
  static styles = css`
    :host { display: block; width: 2880px; height: 1800px; overflow: hidden; background: #2d2d2d; font-family: Inter, "Liberation Sans", sans-serif; }
    svg { display: block; }
    .window { display: flex; gap: 8px; box-sizing: border-box; width: 2880px; height: 1751px; padding-top: 7px; background: #030614; border: solid #54555c; border-width: 2px 2px 2px 0; border-radius: 8px 24px 24px 8px; box-shadow: 0 -1px 0 #0c0c0c; }
    .main { width: 2776px; }
    .tabs { display: flex; align-items: center; height: 72px; }
    .group { display: flex; align-items: center; box-sizing: border-box; width: 588px; height: 72px; margin: 0 8px; padding-left: 12px; border-radius: 18px; background: #1e1f2b; }
    .mark { width: 12px; height: 48px; border-radius: 6px; background: #4a21f5; margin-right: 4px; }
    .plus { display: flex; align-items: center; justify-content: center; width: 36px; height: 36px; border-radius: 18px; background: #1e1f2b; margin: 0 72px 0 16px; }
    .find { padding-top: 14px; }
    .bars { display: flex; gap: 3px; margin: 8px 0; }
    .bar { display: flex; align-items: center; box-sizing: border-box; height: 72px; border-radius: 20px; background: #202234; }
    .address { width: 2609px; padding: 0 15px 0 22px; }
    .ext { width: 164px; padding: 0 12px 0 21px; }
    .fwd { margin: 0 36px 0 50px; }
    .vpn { box-sizing: border-box; width: 44px; height: 30px; border: 2px solid #9c9da6; border-radius: 6px; color: #f3f3f5; font-size: 17px; font-weight: 700; line-height: 27px; letter-spacing: -1.200px; text-align: center; margin: 0 12px 0 41px; }
    .url { margin-left: 18px; flex: 1; font-size: 28px; line-height: 40px; color: #b4bac6; }
    .host { color: #fff; }
    .action { position: relative; width: 60px; display: flex; justify-content: center; }
    .dot { position: absolute; top: -8px; right: 7px; width: 16px; height: 16px; border-radius: 50%; background: #4a21f5; }
    .wheel { display: flex; align-items: center; justify-content: center; width: 30px; height: 30px; border-radius: 50%; background: radial-gradient(circle, rgba(255,255,255,.75), rgba(255,255,255,0) 60%), conic-gradient(#ffe14a, #ff7a3c 60deg, #ff3d7a 100deg, #d63df0 140deg, #4a35f0 180deg, #2f9df5 225deg, #2fe8b0 265deg, #5fe84a 300deg, #d8f04a 335deg, #ffe14a); margin-right: 33px; }
    .ext .mark { margin: 0 0 0 auto; }
  `;
  render() {
    return html`
      <mac-menubar></mac-menubar>
      <div class="window">
        <opera-sidebar></opera-sidebar>
        <div class="main">
          <div class="tabs">
            <browser-tab divider label="Jobs sind unser Job" .favicon=${fav.jobs}></browser-tab>
            <browser-tab label="Create a Palette - Coolors" .favicon=${fav.coolors}></browser-tab>
            <div class="group">
              <i class="mark"></i>
              <browser-tab divider tight label="Team - OZ Hafencity" .favicon=${fav.oz}></browser-tab>
              <browser-tab label="Initiativbewerbung |" .favicon=${fav.initiative}></browser-tab>
            </div>
            <browser-tab divider tight label="LAAX | Graubünden" .favicon=${fav.laax}></browser-tab>
            <browser-tab divider label="17 Web Developer Portfolio" .favicon=${fav.mailchimp}></browser-tab>
            <browser-tab divider label="DeepL Translate: The" .favicon=${fav.deepl}></browser-tab>
            <browser-tab tight label="Veolia Towers Hamburg" .favicon=${fav.veolia}></browser-tab>
            <browser-tab active label="localhost:3000/profile" .favicon=${fav.book}></browser-tab>
            <div class="plus">${icon(20, 20, "0 0 20 20", svg`<path stroke="#fff" stroke-width="3.800" d="M10 3.500v13M3.500 10h13"/>`)}</div>
            <div class="find">${icon(32, 32, "0 0 32 32", svg`<circle cx="13.200" cy="13" r="10" stroke="#fff" stroke-width="2.100"/><path stroke="#fff" stroke-width="2.100" d="m20.500 20.500 8.500 8.500"/>`)}</div>
          </div>
          <div class="bars">
            <div class="bar address">
              ${back}<span class="fwd">${forward}</span>${reload}
              <span class="vpn">VPN</span>${globe}
              <span class="url"><span class="host">localhost</span>:3000/profile</span>
              ${ACTIONS.map((a) => html`<span class="action">${icon(32, 32, "0 0 32 32", a.body)}${a.dot ? html`<i class="dot"></i>` : nothing}</span>`)}
            </div>
            <div class="bar ext"><span class="wheel">${dropper}</span>${cube}<i class="mark"></i></div>
          </div>
          <workout-page></workout-page>
        </div>
      </div>`;
  }
}
